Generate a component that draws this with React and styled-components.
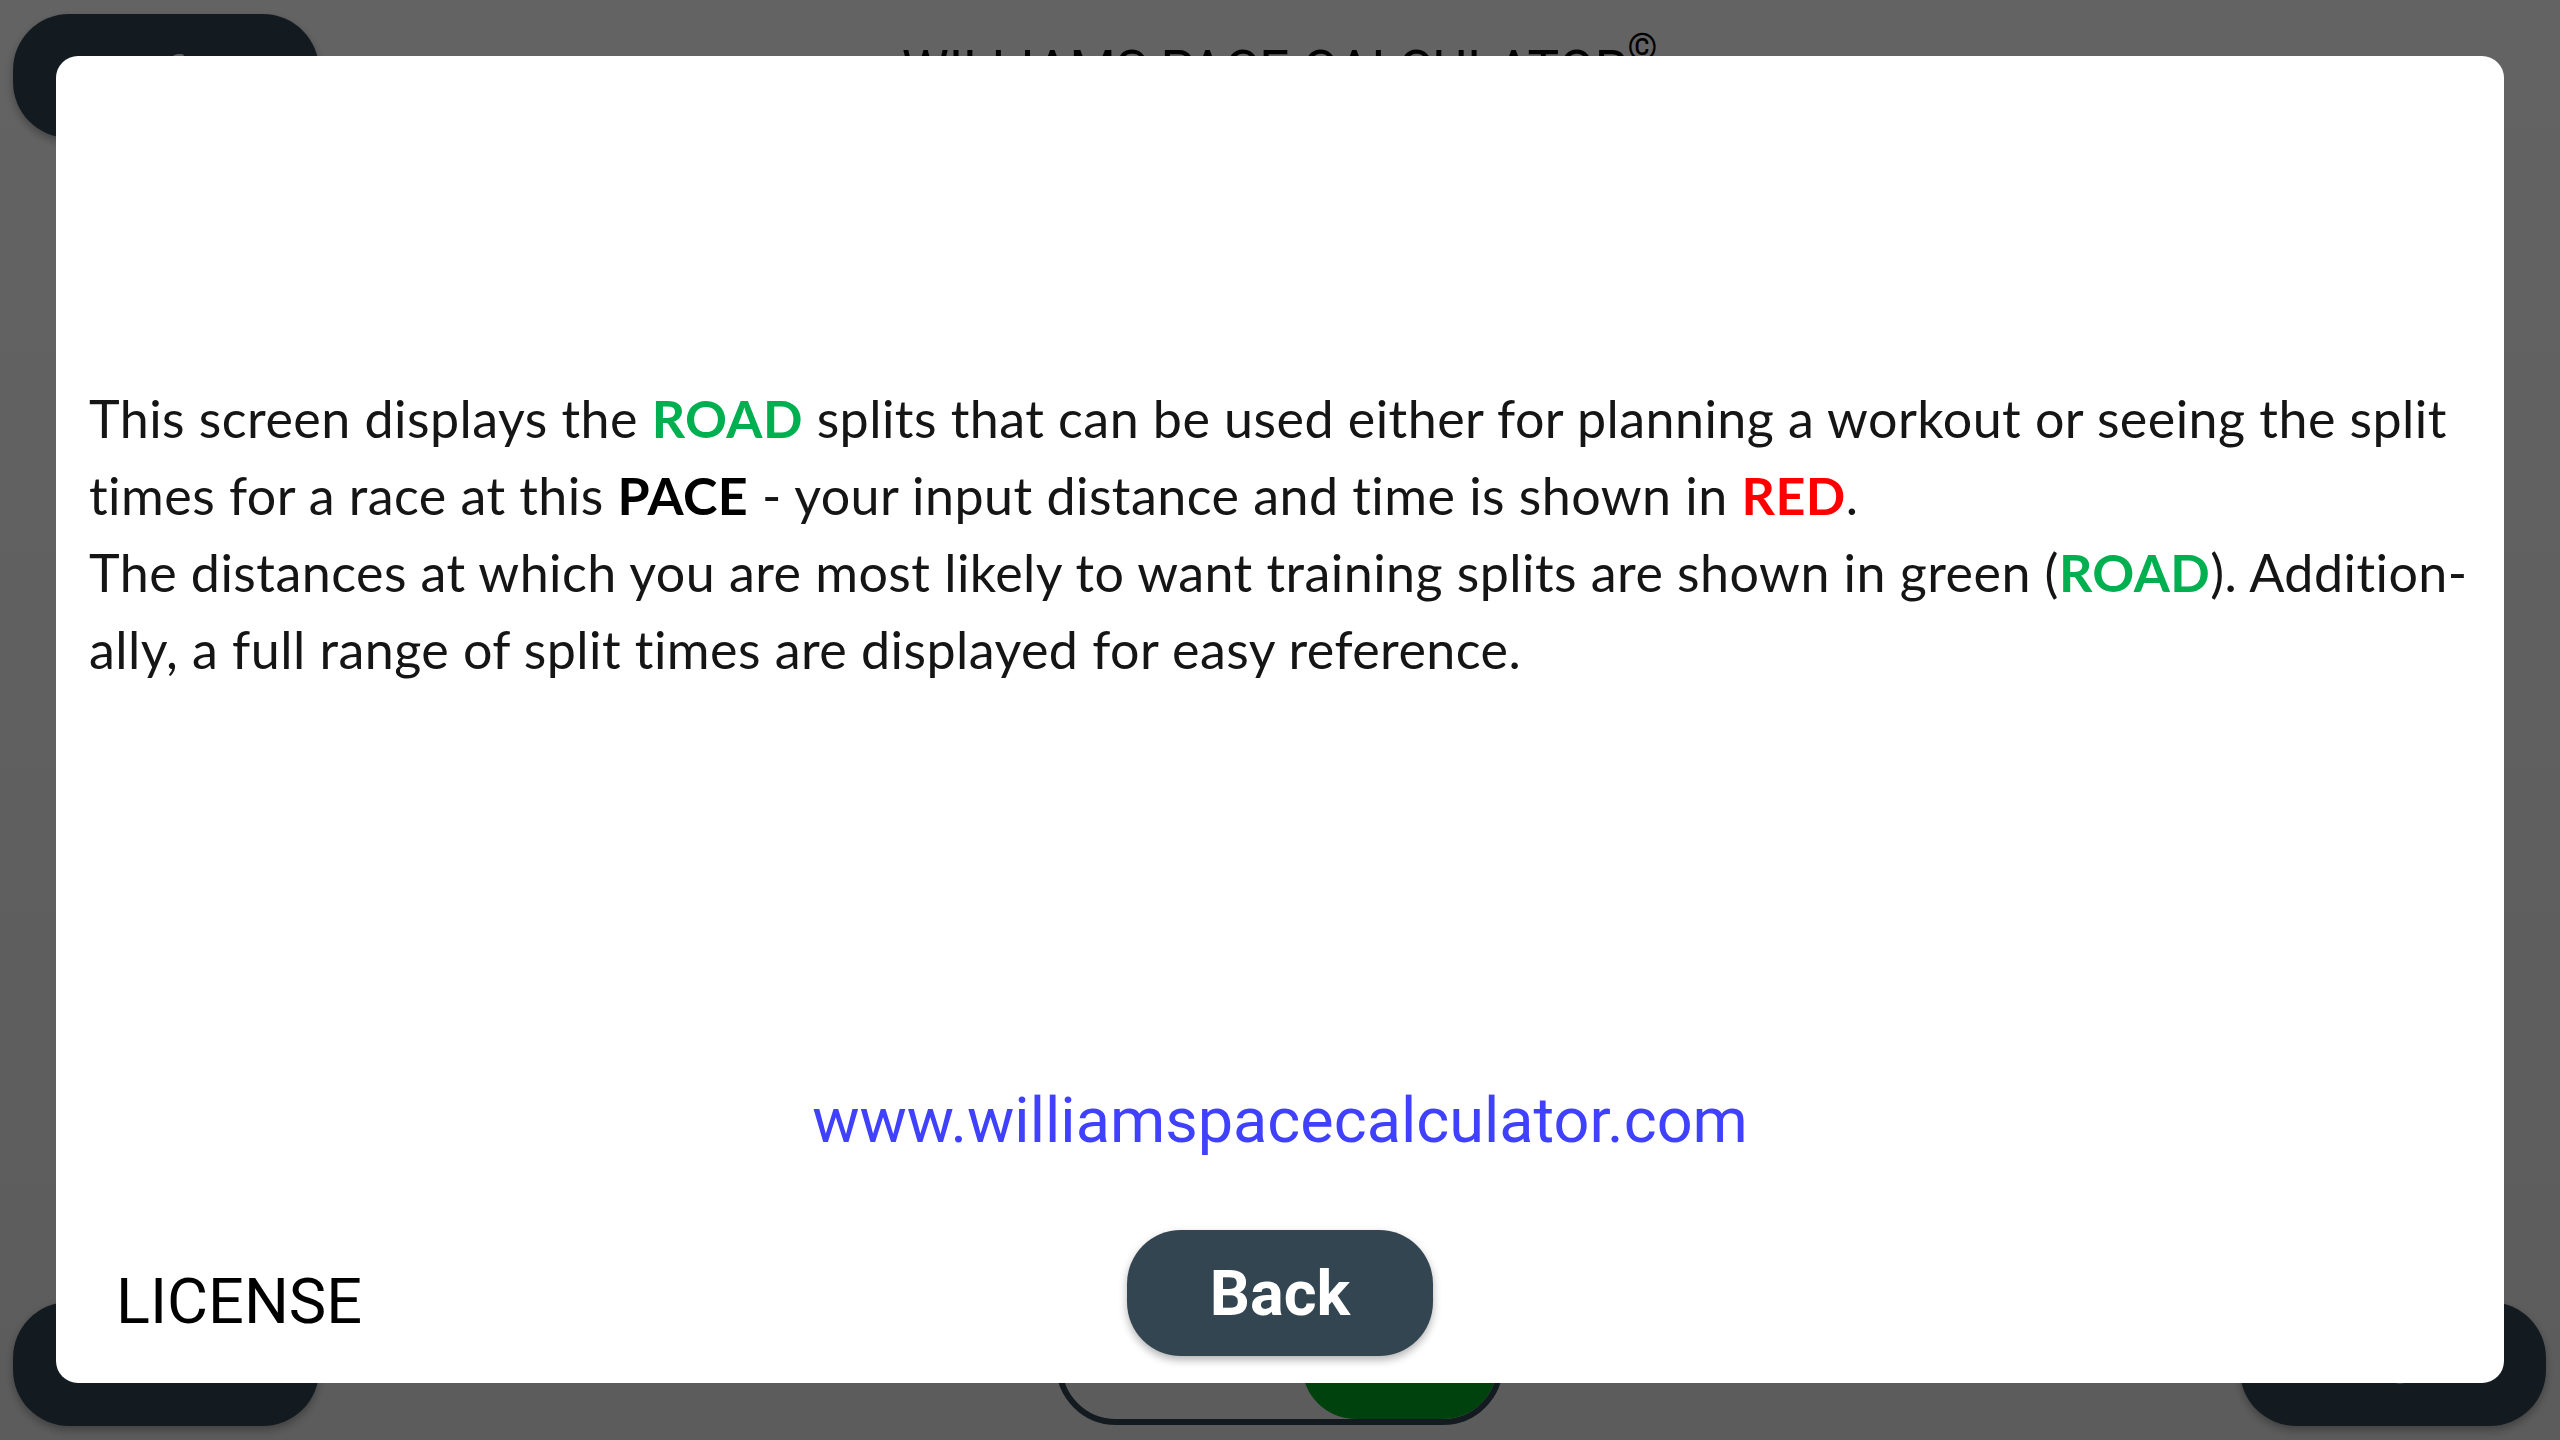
import React from 'react';
import styled, { createGlobalStyle } from 'styled-components';

const GlobalStyle = createGlobalStyle`
    html, body {
        margin: 0;
        padding: 0;
        height: 100%;
    }
    body {
        font-family: Roboto, "Liberation Sans", sans-serif;
        overflow: hidden;
    }
    #root {
        height: 100%;
    }
`;

const Screen = styled.div`
    position: relative;
    height: 100vh;
    box-sizing: border-box;
    padding: 14px 14px 14px 13px;
    display: flex;
    flex-direction: column;
    justify-content: space-between;
    background: linear-gradient(#f8f8f8, #e6e6e6);
`;
const TopBar = styled.div`
    display: grid;
    grid-template-columns: 1fr auto 1fr;
    align-items: center;
`;
const BottomBar = styled.div`
    display: flex;
    justify-content: space-between;
    align-items: flex-end;
`;
const NavButton = styled.button`
    width: 306px;
    height: 124px;
    border: none;
    border-radius: 56px;
    background: #334550;
    color: #f2f2f2;
    font: 700 54px Roboto, "Liberation Sans", sans-serif;
    box-shadow: 0 4px 8px rgba(0, 0, 0, 0.3);
    justify-self: start;
`;
const Title = styled.h1`
    margin: 0 0 12px;
    font: 400 53px/1 Roboto, "Liberation Sans", sans-serif;
    color: #000;
    white-space: nowrap;
`;
const Copy = styled.span`
    font-size: 38px;
    vertical-align: 27px;
    line-height: 0;
`;
const Toggle = styled.div`
    width: 447px;
    height: 120px;
    box-sizing: border-box;
    border: 6px solid #334550;
    border-radius: 60px;
    display: flex;
    justify-content: flex-end;
    margin-bottom: 1px;
`;
const Thumb = styled.div`
    width: 195px;
    height: 100%;
    border-radius: 54px;
    background: #00a525;
`;

const Overlay = styled.div`
    position: absolute;
    inset: 0;
    box-sizing: border-box;
    padding: 56px 56px 57px 56px;
    display: flex;
    background: rgba(0, 0, 0, 0.6);
`;
const Panel = styled.div`
    flex: 1;
    background: #fff;
    border-radius: 22px;
    display: flex;
    flex-direction: column;
    padding: 324px 0 27px;
`;
const HelpText = styled.p`
    margin: 0 0 0 33px;
    font-family: Lato, "Open Sans", sans-serif;
    font-size: 52px;
    letter-spacing: 0.45px;
    line-height: 77px;
    color: #151515;
    white-space: nowrap;
`;
const Mark = styled.b`
    font-weight: 700;
    color: ${(p) => p.color || '#000'};
`;
const Spacer = styled.div`
    flex: 1;
`;
const SiteLink = styled.a`
    align-self: center;
    font: 400 63px/74px Roboto, "Liberation Sans", sans-serif;
    color: #4040ff;
    text-decoration: none;
`;
const Footer = styled.div`
    margin-top: 72px;
    padding: 0 60px;
    display: grid;
    grid-template-columns: 1fr auto 1fr;
    align-items: center;
`;
const License = styled.span`
    justify-self: start;
    padding-top: 16px;
    font: 400 63px Roboto, "Liberation Sans", sans-serif;
    color: #000;
`;
const BackButton = styled.button`
    width: 306px;
    height: 126px;
    border: none;
    border-radius: 54px;
    background: #334550;
    color: #fff;
    font: 700 63px Roboto, "Liberation Sans", sans-serif;
    box-shadow: 0 4px 8px rgba(0, 0, 0, 0.3);
`;

const GREEN = '#00b050';
const RED = '#ff0000';

const App = () => (
    <>
        <GlobalStyle />
        <Screen>
            <TopBar>
                <NavButton>Info</NavButton>
                <Title>
                    WILLIAMS PACE CALCULATOR<Copy>©</Copy>
                </Title>
                <span />
            </TopBar>
            <BottomBar>
                <NavButton>HELP</NavButton>
                <Toggle>
                    <Thumb />
                </Toggle>
                <NavButton>LIST</NavButton>
            </BottomBar>

            <Overlay>
                <Panel>
                    <HelpText>
                        This screen displays the <Mark color={GREEN}>ROAD</Mark> splits that can be used either for planning a workout or seeing the split
                        <br />
                        times for a race at this <Mark>PACE</Mark> - your input distance and time is shown in <Mark color={RED}>RED</Mark>.
                        <br />
                        The distances at which you are most likely to want training splits are shown in green (<Mark color={GREEN}>ROAD</Mark>). Addition-
                        <br />
                        ally, a full range of split times are displayed for easy reference.
                    </HelpText>
                    <Spacer />
                    <SiteLink href="#">www.williamspacecalculator.com</SiteLink>
                    <Footer>
                        <License>LICENSE</License>
                        <BackButton>Back</BackButton>
                        <span />
                    </Footer>
                </Panel>
            </Overlay>
        </Screen>
    </>
);

export default App;
